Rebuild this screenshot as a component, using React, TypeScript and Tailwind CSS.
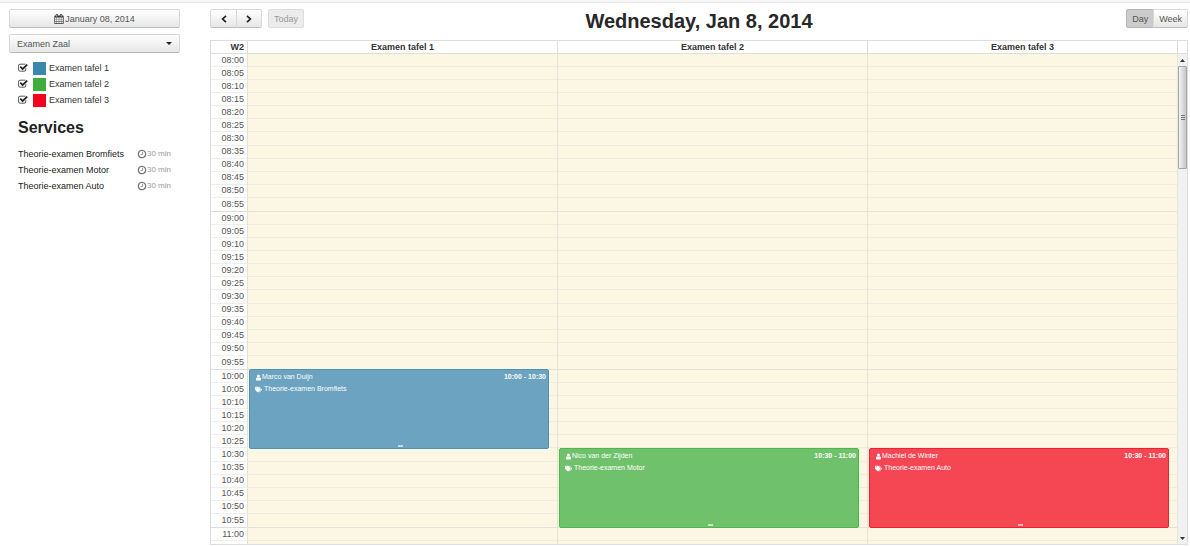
import { useState } from "react";
import type { ReactNode } from "react";
import { FaTags } from "react-icons/fa";

const HOURS = [8, 9, 10];
const MINUTES = ["00", "05", "10", "15", "20", "25", "30", "35", "40", "45", "50", "55"];
const HOUR_HEIGHT = 158;

const tables = [
  {
    name: "Examen tafel 1",
    swatch: "bg-[#3a87ad]",
    card: "bg-[#6ba3c0] border-[#4b93b5]",
    event: { client: "Marco van Duijn", service: "Theorie-examen Bromfiets", time: "10:00 - 10:30", start: 120, length: 30 },
  },
  {
    name: "Examen tafel 2",
    swatch: "bg-[#3fad3a]",
    card: "bg-[#6fc26b] border-[#50b54c]",
    event: { client: "Nico van der Zijden", service: "Theorie-examen Motor", time: "10:30 - 11:00", start: 150, length: 30 },
  },
  {
    name: "Examen tafel 3",
    swatch: "bg-[#f2051c]",
    card: "bg-[#f44653] border-[#ed1f33]",
    event: { client: "Machiel de Winter", service: "Theorie-examen Auto", time: "10:30 - 11:00", start: 150, length: 30 },
  },
];

const services = ["Theorie-examen Bromfiets", "Theorie-examen Motor", "Theorie-examen Auto"];

const buttonLook = "border border-[#d8d8d8] border-b-[#bcbcbc] bg-linear-to-b from-white to-[#e6e6e6]";

function Icon({ className, children }: { className: string; children: ReactNode }) {
  return (
    <svg viewBox="0 0 1792 1792" fill="currentColor" className={className} aria-hidden="true">
      {children}
    </svg>
  );
}

function CalendarIcon() {
  return (
    <Icon className="size-[10px] text-[#333]">
      <path d="M192 1664h288v-288h-288v288zm352 0h320v-288h-320v288zm-352-352h288v-320h-288v320zm352 0h320v-320h-320v320zm-352-384h288v-288h-288v288zm736 736h320v-288h-320v288zm-384-736h320v-288h-320v288zm768 736h288v-288h-288v288zm-384-352h320v-320h-320v320zm-352-864v-288q0-13-9.5-22.5t-22.5-9.5h-64q-13 0-22.5 9.5t-9.5 22.5v288q0 13 9.5 22.5t22.5 9.5h64q13 0 22.5-9.5t9.5-22.5zm736 864h288v-320h-288v320zm-384-384h320v-288h-320v288zm384 0h288v-288h-288v288zm32-480v-288q0-13-9.5-22.5t-22.5-9.5h-64q-13 0-22.5 9.5t-9.5 22.5v288q0 13 9.5 22.5t22.5 9.5h64q13 0 22.5-9.5t9.5-22.5zm384-64v1280q0 52-38 90t-90 38h-1408q-52 0-90-38t-38-90v-1280q0-52 38-90t90-38h128v-96q0-66 47-113t113-47h64q66 0 113 47t47 113v96h384v-96q0-66 47-113t113-47h64q66 0 113 47t47 113v96h128q52 0 90 38t38 90z" />
    </Icon>
  );
}

function CheckIcon() {
  return (
    <Icon className="pointer-events-none size-[10px] text-[#222] opacity-0 [grid-area:1/1] peer-checked:opacity-100">
      <path d="M1472 930v318q0 119-84.5 203.5t-203.5 84.5h-832q-119 0-203.5-84.5t-84.5-203.5v-832q0-119 84.5-203.5t203.5-84.5h832q63 0 117 25 15 7 18 23 3 17-9 29l-49 49q-10 10-23 10-3 0-9-2-23-6-45-6h-832q-66 0-113 47t-47 113v832q0 66 47 113t113 47h832q66 0 113-47t47-113v-254q0-13 9-22l64-64q10-10 23-10 6 0 12 3 20 8 20 29zm231-489l-814 814q-24 24-57 24t-57-24l-430-430q-24-24-24-57t24-57l110-110q24-24 57-24t57 24l263 263 647-647q24-24 57-24t57 24l110 110q24 24 24 57t-24 57z" />
    </Icon>
  );
}

function ClockIcon() {
  return (
    <Icon className="size-[10px] text-[#777]">
      <path d="M1024 544v448q0 14-9 23t-23 9h-320q-14 0-23-9t-9-23v-64q0-14 9-23t23-9h224v-352q0-14 9-23t23-9h64q14 0 23 9t9 23zm416 352q0-148-73-273t-198-198-273-73-273 73-198 198-73 273 73 273 198 198 273 73 273-73 198-198 73-273zm224 0q0 209-103 385.5t-279.5 279.5-385.5 103-385.5-103-279.5-279.5-103-385.5 103-385.5 279.5-279.5 385.5-103 385.5 103 279.5 279.5 103 385.5z" />
    </Icon>
  );
}

function UserIcon() {
  return (
    <Icon className="size-[7px]">
      <path d="M1536 1399q0 109-62.5 187t-150.5 78h-854q-88 0-150.5-78t-62.5-187q0-85 8.5-160.5t31.5-152 58.5-131 94-89 134.5-34.5q131 128 313 128t313-128q76 0 134.5 34.5t94 89 58.5 131 31.5 152 8.5 160.5zm-256-887q0 159-112.5 271.5t-271.5 112.5-271.5-112.5-112.5-271.5 112.5-271.5 271.5-112.5 271.5 112.5 112.5 271.5z" />
    </Icon>
  );
}

function Sidebar() {
  return (
    <aside className="w-[171px] shrink-0">
      <button className={`flex h-[19px] w-full items-center justify-center gap-px rounded-[2px] text-[#555] ${buttonLook}`}>
        <CalendarIcon />
        January 08, 2014
      </button>

      <div className="relative mt-[6px]">
        <select aria-label="Location" className={`block h-[19px] w-full appearance-none rounded-[2px] px-[7px] text-[#555] ${buttonLook}`}>
          <option>Examen Zaal</option>
        </select>
        <svg viewBox="0 0 6 3" className="pointer-events-none absolute top-2 right-2 h-[3px] w-[6px]" aria-hidden="true">
          <path d="M0 0h6L3 3z" fill="#222" />
        </svg>
      </div>

      <div className="mt-[7px] px-[9px]">
        {tables.map((table) => (
          <label key={table.name} className="flex h-4 items-center text-[#333]">
            <span className="grid">
              <input type="checkbox" defaultChecked className="peer size-[10px] appearance-none [grid-area:1/1]" />
              <CheckIcon />
            </span>
            <span className={`mr-[3px] ml-[5px] size-[13px] ${table.swatch}`}></span>
            {table.name}
          </label>
        ))}
      </div>

      <div className="px-[9px]">
        <h2 className="mt-[10px] mb-2 text-base leading-5 font-bold text-[#222]">Services</h2>
        <ul>
          {services.map((service) => (
            <li key={service} className="flex h-4 items-center justify-between text-[#222]">
              {service}
              <span className="flex items-center text-[8px] text-[#999]">
                <ClockIcon />
                30 min
              </span>
            </li>
          ))}
        </ul>
      </div>
    </aside>
  );
}

function Toolbar() {
  const [view, setView] = useState("Day");

  return (
    <header className="grid grid-cols-[1fr_auto_1fr] items-start">
      <div className="flex gap-[6px]">
        <div className="flex">
          <button aria-label="Previous day" className={`grid h-[19px] w-[27px] place-items-center rounded-l-[2px] ${buttonLook}`}>
            <svg viewBox="0 0 6 8" className="h-2 w-[6px]" fill="none" stroke="#222" strokeWidth="1.7">
              <path d="M5 0.8 1.6 4 5 7.2" />
            </svg>
          </button>
          <button aria-label="Next day" className={`-ml-px grid h-[19px] w-[26px] place-items-center rounded-r-[2px] ${buttonLook}`}>
            <svg viewBox="0 0 6 8" className="h-2 w-[6px]" fill="none" stroke="#222" strokeWidth="1.7">
              <path d="M1 0.8 4.4 4 1 7.2" />
            </svg>
          </button>
        </div>
        <button disabled className="h-[19px] rounded-[2px] border border-[#dcdcdc] bg-[#ececec] px-[5px] text-[#999]">
          Today
        </button>
      </div>

      <h1 className="text-xl leading-6 font-bold text-[#282828]">Wednesday, Jan 8, 2014</h1>

      <div className="flex justify-end">
        {["Day", "Week"].map((name) => (
          <button
            key={name}
            onClick={() => setView(name)}
            className={`-ml-px h-[19px] px-[5px] text-[#555] first:rounded-l-[2px] last:rounded-r-[2px] ${
              view === name ? "border border-[#b5b5b5] bg-[#cbcbcb]" : buttonLook
            }`}
          >
            {name}
          </button>
        ))}
      </div>
    </header>
  );
}

function TimeAxis() {
  return (
    <div>
      {HOURS.map((hour) => (
        <div key={hour} className="grid h-[158px] grid-rows-12 border-b border-[#ddd]">
          {MINUTES.map((minute) => (
            <div key={minute} className="flex min-h-0 items-center justify-end border-b border-[#eee] pr-[3px] leading-none text-[#555] last:border-b-0">
              {String(hour).padStart(2, "0")}:{minute}
            </div>
          ))}
        </div>
      ))}
      <div className="flex h-[13px] items-center justify-end border-b border-[#eee] pr-[3px] leading-none text-[#555]">11:00</div>
    </div>
  );
}

function DayColumn({ table }: { table: (typeof tables)[number] }) {
  const { event } = table;

  return (
    <div className="relative border-l border-[#e4e2da] bg-[#fcf7e2]">
      {HOURS.map((hour) => (
        <div key={hour} className="grid h-[158px] grid-rows-12 border-b border-[#e4e2da]">
          {MINUTES.map((minute) => (
            <div key={minute} className="min-h-0 border-b border-[#f0ecdd] last:border-b-0"></div>
          ))}
        </div>
      ))}
      <div className="h-[13px] border-b border-[#f0ecdd]"></div>

      <article
        className={`absolute right-2 left-px flex flex-col rounded-[2px] border pt-px pr-[2px] pl-[5px] text-[7px] leading-[12px] text-white ${table.card}`}
        style={{ top: (event.start * HOUR_HEIGHT) / 60 - 1, height: (event.length * HOUR_HEIGHT) / 60 + 1 }}
      >
        <div className="flex items-center justify-between">
          <span className="flex items-center">
            <UserIcon />
            {event.client}
          </span>
          <span className="font-bold">{event.time}</span>
        </div>
        <div className="flex items-center gap-[2px]">
          <FaTags className="size-[7px]" />
          {event.service}
        </div>
        <div className="mt-auto mb-px h-[2px] w-[5px] self-center bg-white/60"></div>
      </article>
    </div>
  );
}

function ScrollRail() {
  return (
    <div className="flex flex-col items-center border-l border-[#e4e4e4] bg-[#f1f1f1]">
      <svg viewBox="0 0 5 3" className="mt-[5px] mb-1 h-[3px] w-[5px] shrink-0" aria-hidden="true">
        <path d="M0 3h5L2.500 0z" fill="#333" />
      </svg>
      <div className="flex h-[103px] w-full flex-col items-center justify-center gap-px rounded-[1px] border border-[#a5a5a5] bg-linear-to-r from-[#f3f3f3] to-[#c6c6c8]">
        <span className="h-px w-1 bg-[#777]"></span>
        <span className="h-px w-1 bg-[#777]"></span>
        <span className="h-px w-1 bg-[#777]"></span>
      </div>
      <svg viewBox="0 0 5 3" className="mt-auto mb-1 h-[3px] w-[5px] shrink-0" aria-hidden="true">
        <path d="M0 0h5L2.500 3z" fill="#333" />
      </svg>
    </div>
  );
}

export default function App() {
  return (
    <div className="flex h-screen flex-col overflow-hidden bg-white font-['Liberation_Sans',Arial,sans-serif] text-[9px] leading-3">
      <div className="h-[3px] shrink-0 border-b border-[#e8e8e8] bg-[#f6f6f6]"></div>

      <div className="flex min-h-0 flex-1 gap-[30px] pt-[6px] pr-[2px] pb-px pl-[9px]">
        <Sidebar />

        <main className="flex min-w-0 flex-1 flex-col">
          <Toolbar />

          <section className="mt-[7px] flex min-h-0 flex-1 flex-col border border-[#ddd]">
            <div className="grid shrink-0 grid-cols-[36px_1fr_1fr_1fr_10px] border-b border-[#ddd] text-center font-bold text-[#333]">
              <div className="pr-[3px] text-right">W2</div>
              {tables.map((table) => (
                <div key={table.name} className="border-l border-[#ddd]">
                  {table.name}
                </div>
              ))}
              <div className="border-l border-[#ddd]"></div>
            </div>

            <div className="grid min-h-0 flex-1 grid-cols-[1fr_10px] grid-rows-[minmax(0,1fr)]">
              <div className="grid grid-cols-[36px_1fr_1fr_1fr] overflow-hidden">
                <TimeAxis />
                {tables.map((table) => (
                  <DayColumn key={table.name} table={table} />
                ))}
              </div>
              <ScrollRail />
            </div>
          </section>
        </main>
      </div>
    </div>
  );
}
